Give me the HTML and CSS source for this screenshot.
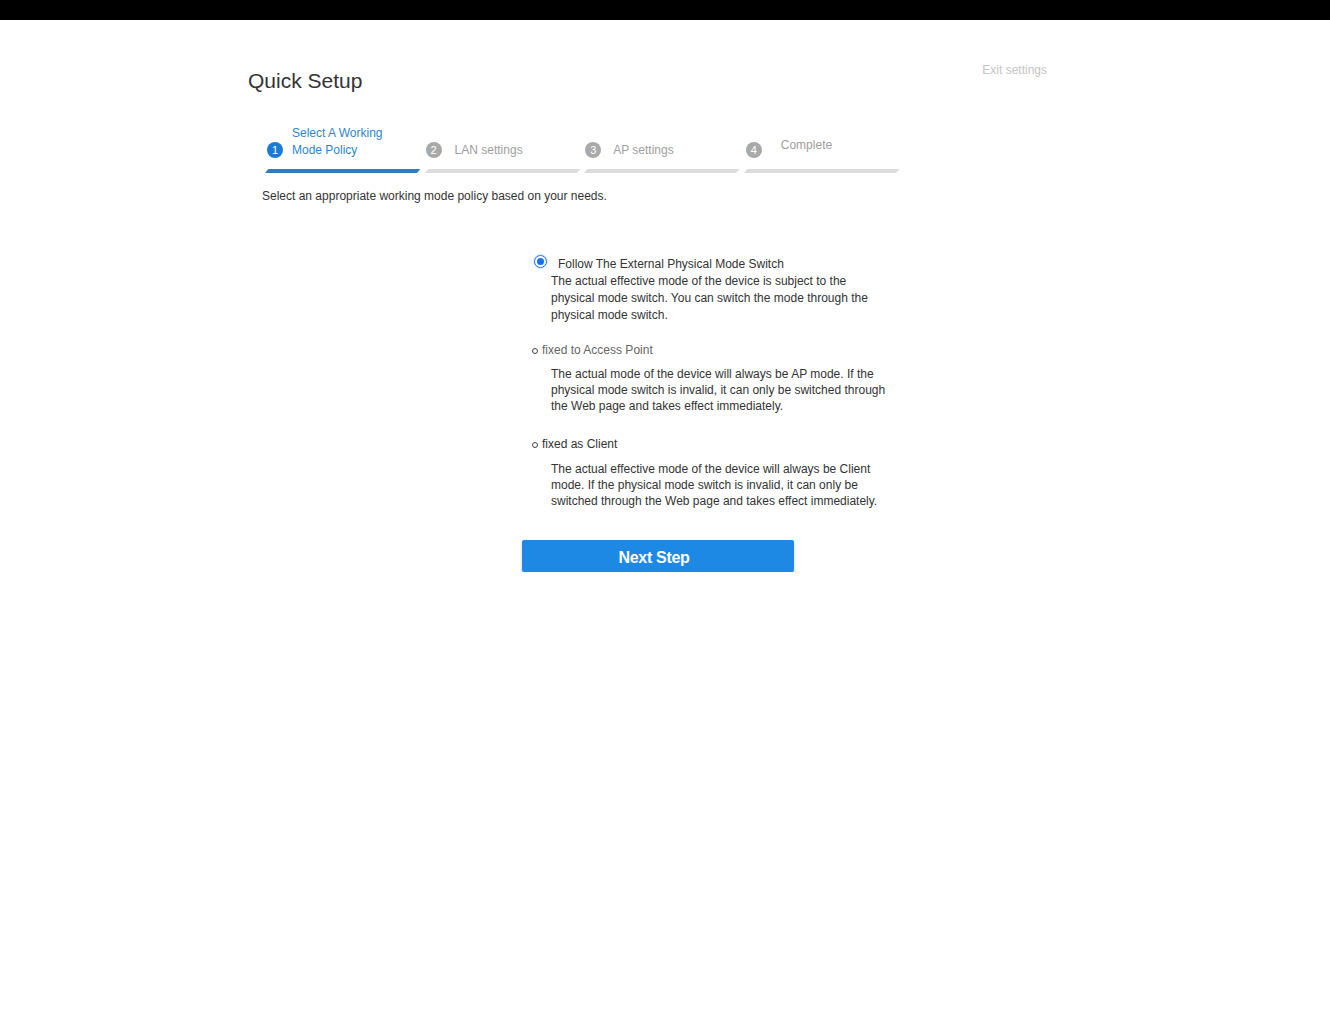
FILE: index.html
```html
<!DOCTYPE html>
<html lang="en">
<head>
    <meta charset="UTF-8">
    <title>Quick Setup</title>
    <link rel="stylesheet" href="styles.css">
</head>
<body>
    <div class="topbar"></div>

    <div class="container">
        <div class="header">
            <h1>Quick Setup</h1>
            <a class="exit" href="#">Exit settings</a>
        </div>

        <div class="steps">
            <div class="step active">
                <div class="step-head">
                    <span class="num">1</span>
                    <span class="label">Select A Working<br>Mode Policy</span>
                </div>
                <div class="bar"></div>
            </div>
            <div class="step second-step">
                <div class="step-head">
                    <span class="num">2</span>
                    <span class="label">LAN settings</span>
                </div>
                <div class="bar"></div>
            </div>
            <div class="step third-step">
                <div class="step-head">
                    <span class="num">3</span>
                    <span class="label">AP settings</span>
                </div>
                <div class="bar"></div>
            </div>
            <div class="step last">
                <div class="step-head">
                    <span class="num">4</span>
                    <span class="label">Complete</span>
                </div>
                <div class="bar"></div>
            </div>
        </div>

        <p class="intro">Select an appropriate working mode policy based on your needs.</p>

        <div class="options">
            <div class="option first">
                <div class="option-title">
                    <span class="radio checked"></span>
                    <span>Follow The External Physical Mode Switch</span>
                </div>
                <p class="option-desc">The actual effective mode of the device is subject to the physical mode switch. You can switch the mode through the physical mode switch.</p>
            </div>

            <div class="option second">
                <div class="option-title">
                    <span class="dot"></span>
                    <span>fixed to Access Point</span>
                </div>
                <p class="option-desc">The actual mode of the device will always be AP mode. If the physical mode switch is invalid, it can only be switched through the Web page and takes effect immediately.</p>
            </div>

            <div class="option third">
                <div class="option-title">
                    <span class="dot"></span>
                    <span>fixed as Client</span>
                </div>
                <p class="option-desc">The actual effective mode of the device will always be Client mode. If the physical mode switch is invalid, it can only be switched through the Web page and takes effect immediately.</p>
            </div>

            <button class="btn-next">Next Step</button>
        </div>
    </div>
</body>
</html>
```

FILE: styles.css
```css
body {
    margin: 0;
    font-family: "Liberation Sans", Arial, sans-serif;
    background-color: #fff;
    color: #333;
}
.topbar {
    height: 20px;
    background-color: #000;
}
.container {
    width: 834px;
    margin: 0 auto;
    padding-top: 43px;
}
.header {
    display: flex;
    justify-content: space-between;
    align-items: flex-start;
    padding-right: 35px;
}
.header h1 {
    margin: 6px 0 0;
    font-size: 21px;
    font-weight: normal;
    line-height: 24px;
    color: #333;
}
.exit {
    font-size: 12px;
    line-height: 14px;
    color: #c4c4c4;
    text-decoration: none;
}
.steps {
    display: grid;
    grid-template-columns: repeat(4, 155px);
    column-gap: 4.6px;
    margin-top: 31px;
    padding-left: 17px;
}
.step-head {
    height: 35px;
    display: flex;
    align-items: flex-end;
    gap: 10px;
    padding-left: 1px;
}
.num {
    width: 16px;
    height: 16px;
    border-radius: 50%;
    background-color: #a9a9a9;
    color: #fff;
    font-size: 11px;
    line-height: 16px;
    text-align: center;
    flex-shrink: 0;
    margin-bottom: 1px;
}
.label {
    font-size: 12px;
    line-height: 17px;
    color: #9e9e9e;
}
.bar {
    width: 152px;
    height: 4px;
    margin-top: 10px;
    background-color: #dcdcdc;
    transform: skewX(-40deg);
    transform-origin: bottom left;
}
.step.active .num {
    background-color: #1a7ad4;
    margin-left: 1px;
}
.step.active .step-head {
    gap: 9px;
}
.step.active .label {
    color: #2c86d2;
}
.step.active .bar {
    background-color: #2b7dc6;
}
.step.second-step .step-head {
    gap: 13px;
}
.step.third-step .step-head {
    gap: 12px;
}
.step.last .step-head {
    padding-left: 2px;
    gap: 19px;
}
.step.last .label {
    margin-bottom: 5px;
}
.intro {
    margin: 15px 0 0;
    padding-left: 14px;
    font-size: 12px;
    line-height: 16px;
    color: #333;
}
.options {
    margin-left: 284px;
    margin-top: 51px;
    width: 360px;
}
.option-title {
    display: flex;
    align-items: center;
    font-size: 12px;
    line-height: 17px;
}
.option-desc {
    margin: 0 0 0 19px;
    width: 340px;
    font-size: 12px;
    color: #333;
}
.radio {
    width: 11px;
    height: 11px;
    border: 1px solid #1a73e8;
    border-radius: 50%;
    margin: 0 11px 5px 2px;
    position: relative;
    box-shadow: 0 0 2px rgba(26, 115, 232, 0.5);
}
.radio.checked::after {
    content: "";
    position: absolute;
    left: 2px;
    top: 2px;
    width: 7px;
    height: 7px;
    border-radius: 50%;
    background-color: #1a73e8;
}
.dot {
    width: 4px;
    height: 4px;
    border: 1px solid #444;
    border-radius: 50%;
    margin-right: 4px;
}
.first .option-desc {
    line-height: 17px;
}
.second {
    margin-top: 18px;
}
.second .option-title {
    color: #666;
}
.second .option-desc {
    margin-top: 7px;
    line-height: 16px;
}
.third {
    margin-top: 22px;
}
.third .option-desc {
    margin-top: 8px;
    line-height: 16px;
}
.btn-next {
    display: block;
    margin: 31px 0 0 -10px;
    width: 272px;
    height: 32px;
    padding: 3px 8px 0 0;
    border: none;
    border-radius: 2px;
    background-color: #1e88e5;
    color: #fff;
    font-family: "Liberation Sans", Arial, sans-serif;
    font-size: 16px;
    font-weight: bold;
    letter-spacing: -0.3px;
    box-shadow: 0 2px 3px rgba(0, 0, 0, 0.25);
    cursor: pointer;
}
```
